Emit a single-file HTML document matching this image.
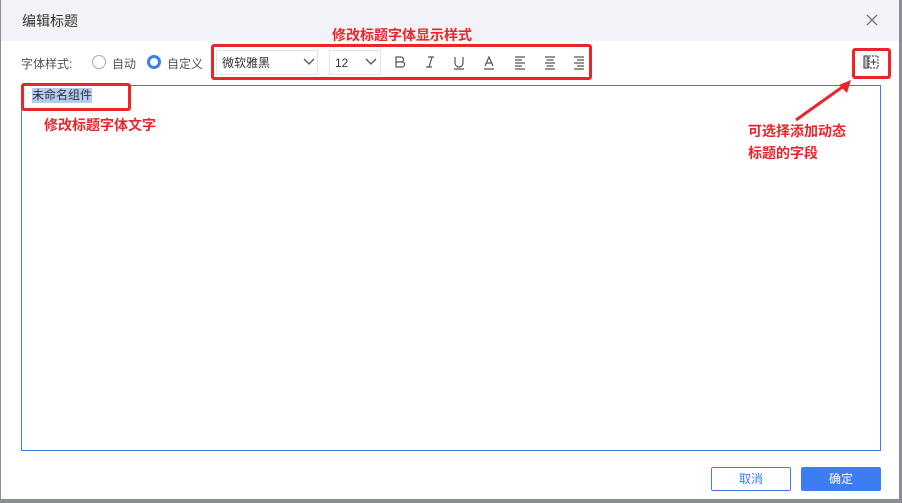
<!DOCTYPE html><html><head><meta charset="utf-8"><style>
body{margin:0;width:902px;height:503px;background:#8a8d94;font-family:"Liberation Sans","Noto Sans CJK SC",sans-serif;position:relative;overflow:hidden}
.dlg{position:absolute;left:1px;top:0;width:898px;height:499px;background:#fff}
.hd{position:absolute;left:0;top:0;width:100%;height:41px;background:#f2f3f7}
.a{position:absolute}
.red{position:absolute;border:3px solid #e8262c;border-radius:3px}
.rt{position:absolute;color:#e8262c;font-weight:bold;font-size:14px}
.sel{position:absolute;border:1px solid #e3e5ea;height:25px;font-size:12px;color:#333;line-height:25px;padding-left:5px;box-sizing:border-box}
</style></head><body><div class="dlg">
<div class="hd"></div>
<div class="a" style="left:21px;top:11px;font-size:14px;color:#333">编辑标题</div>
<svg class="a" style="left:865px;top:14px" width="12" height="12"><path d="M1 1L11 11M11 1L1 11" stroke="#777" stroke-width="1.3"/></svg>
<div class="a" style="left:20px;top:55px;font-size:12px;color:#555">字体样式:</div>
<div class="a" style="left:91px;top:55px;width:12px;height:12px;border:1px solid #aaa;border-radius:50%"></div>
<div class="a" style="left:111px;top:55px;font-size:12px;color:#555">自动</div>
<div class="a" style="left:146px;top:55px;width:8px;height:8px;border:3px solid #3a7ef0;border-radius:50%"></div>
<div class="a" style="left:166px;top:55px;font-size:12px;color:#555">自定义</div>
<div class="sel" style="left:215px;top:50px;width:102px">微软雅黑</div>
<svg class="a" style="left:302px;top:58px" width="12" height="8"><path d="M1 1L6 6L11 1" stroke="#555" fill="none" stroke-width="1.3"/></svg>
<div class="sel" style="left:328px;top:50px;width:52px">12</div>
<svg class="a" style="left:364px;top:58px" width="12" height="8"><path d="M1 1L6 6L11 1" stroke="#555" fill="none" stroke-width="1.3"/></svg>
<svg class="a" style="left:390px;top:55px" width="200" height="16" fill="none" stroke="#555" stroke-width="1.2">
<path d="M5 2h5a2.5 2.5 0 0 1 0 5H5zM5 7h6a2.5 2.5 0 0 1 0 5H5zM5 2v10"/>
<path d="M37 2h6M35 12h6M41 2L38 12"/>
<path d="M64 2v6a4 4 0 0 0 8 0V2M63 14h10"/>
<path d="M94 11L98 2L102 11M95.5 8h5M93 14h10"/>
<path d="M124 2h10M124 5h7M124 8h10M124 11h7M124 14h10"/>
<path d="M154 2h10M155.5 5h7M154 8h10M155.5 11h7M154 14h10"/>
<path d="M183 2h10M186 5h7M183 8h10M186 11h7M183 14h10"/>
</svg>
<svg class="a" style="left:862px;top:55px" width="16" height="14" fill="none" stroke="#555" stroke-width="1.2"><rect x="1" y="1" width="4" height="12" fill="#bbb"/><rect x="6" y="1" width="9" height="12" stroke-dasharray="2 1"/><path d="M10.5 4v6M7.5 7h6"/></svg>
<div class="a" style="left:20px;top:85px;width:858px;height:364px;border:1px solid #3a7ef0"></div>
<div class="a" style="left:31px;top:88px;font-size:12px;color:#333;background:#b3cdf5;line-height:15px">未命名组件</div>
<div class="red" style="left:210px;top:44px;width:375px;height:30px"></div>
<div class="red" style="left:851px;top:48px;width:33px;height:25px"></div>
<div class="red" style="left:20px;top:83px;width:104px;height:22px"></div>
<div class="rt" style="left:331px;top:25px">修改标题字体显示样式</div>
<div class="rt" style="left:43px;top:115px">修改标题字体文字</div>
<div class="rt" style="left:747px;top:120px;line-height:22px">可选择添加动态<br>标题的字段</div>
<svg class="a" style="left:790px;top:75px" width="70" height="50"><path d="M5 45L57 8" stroke="#e8262c" stroke-width="3"/><path d="M60 5L48 10L56 18Z" fill="#e8262c"/></svg>
<div class="a" style="left:710px;top:467px;width:78px;height:22px;border:1px solid #3a7ef0;border-radius:2px;color:#3a7ef0;font-size:12px;text-align:center;line-height:22px">取消</div>
<div class="a" style="left:800px;top:467px;width:80px;height:24px;background:#3a7ef0;border-radius:2px;color:#fff;font-size:12px;text-align:center;line-height:24px">确定</div>
</div></body></html>
